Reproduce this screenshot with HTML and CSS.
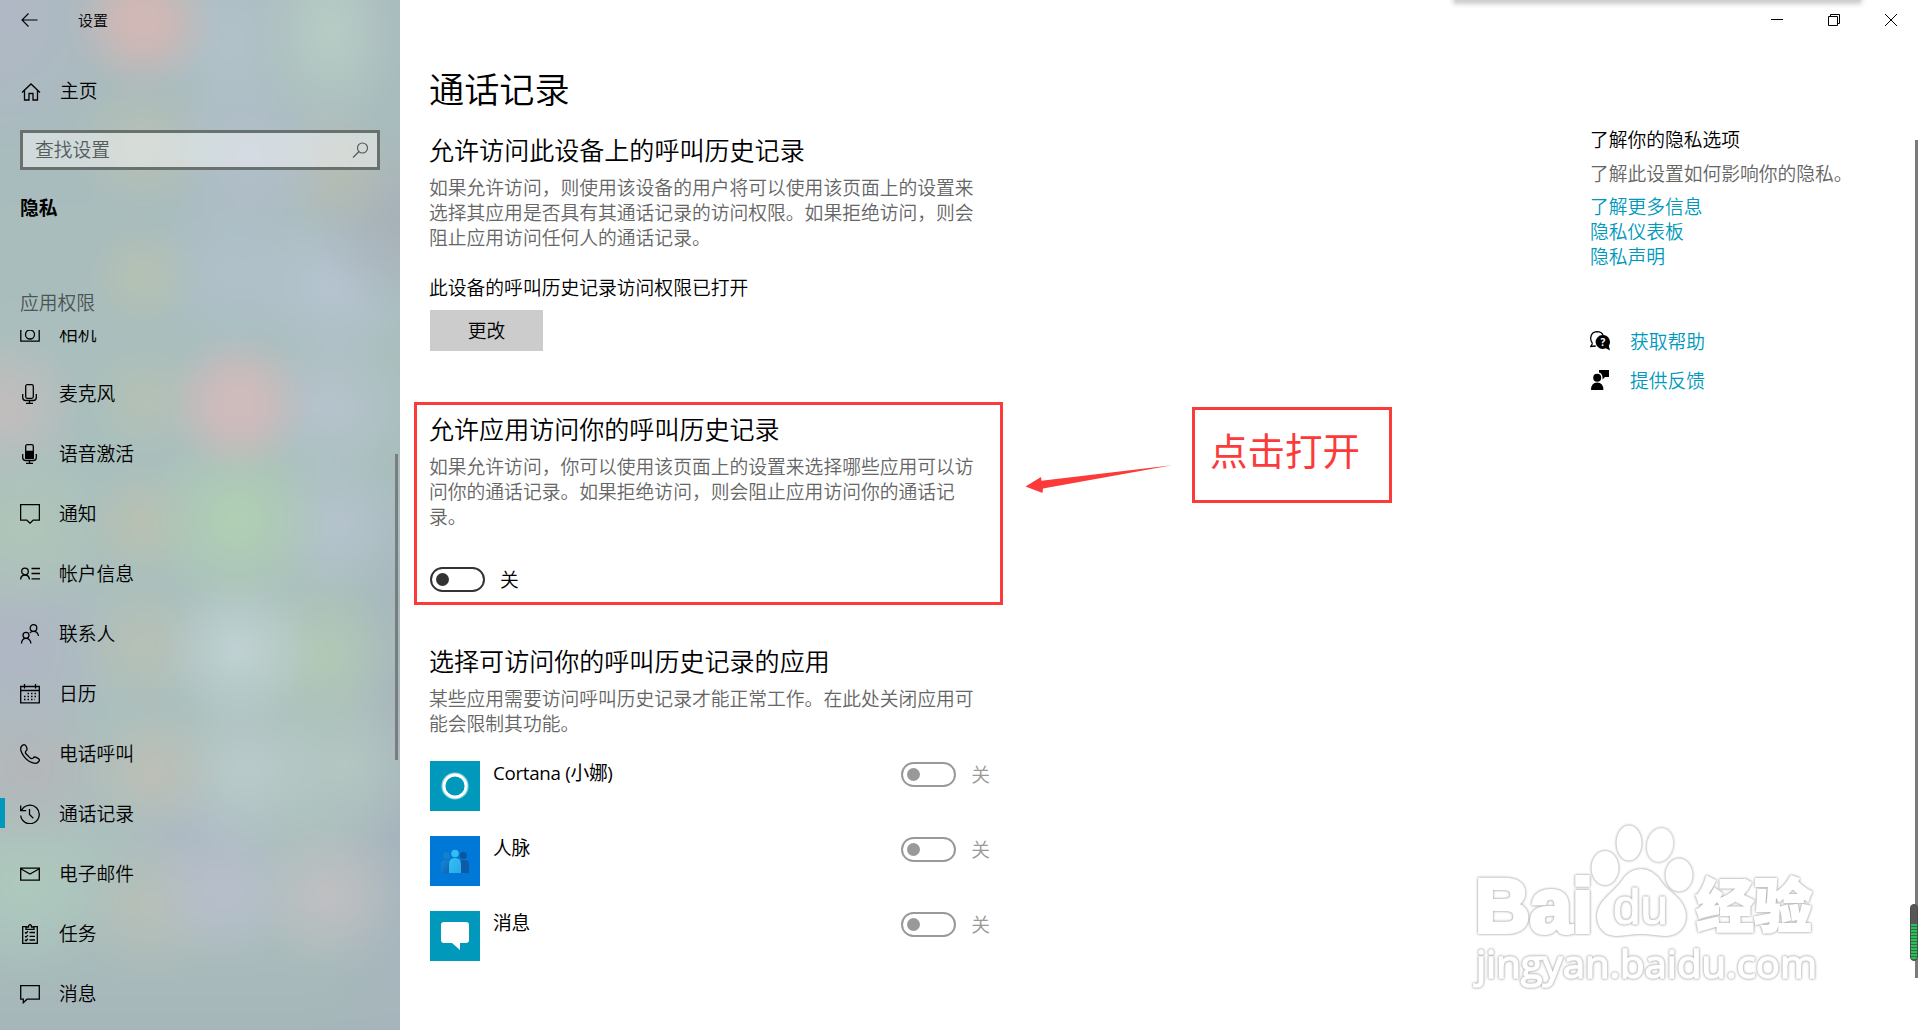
FILE: index.html
```html
<!DOCTYPE html>
<html lang="zh-CN">
<head>
    <meta charset="UTF-8">
    <meta name="viewport" content="width=device-width, initial-scale=1.0">
    <title>设置</title>
    <link rel="stylesheet" href="styles.css">
</head>
<body>

<div class="window">

<!-- Sidebar -->
<div class="sidebar">
    <div class="title-bar">
        <svg class="back" width="17" height="16" viewBox="0 0 17 16"><path d="M16.5 8H1M7.5 1.5L1 8l6.500 6.500"/></svg>
        <span>设置</span>
    </div>
    <div class="home">
        <svg width="20" height="20" viewBox="0 0 20 20"><path d="M1 10.500L10 2l9 8.500M3.500 8.500V18H8v-6.500h4V18h4.500V8.500"/></svg>
        <span>主页</span>
    </div>
    <div class="search">
        <span>查找设置</span>
        <svg width="17" height="17" viewBox="0 0 17 17"><circle cx="10.500" cy="6" r="5"/><path d="M7 9.500L1 15.500"/></svg>
    </div>
    <div class="category">隐私</div>
    <div class="group">应用权限</div>
    <div class="nav">
        <div class="item">
            <svg width="20" height="20" viewBox="0 0 20 20"><path d="M.8 4.500h4L6.500 2h7l1.700 2.500h4V17.200H.8z"/><circle cx="10" cy="10.500" r="4.500"/></svg>
            <span>相机</span>
        </div>
        <div class="item">
            <svg width="20" height="20" viewBox="0 0 20 20"><rect x="5.700" y=".7" width="7.600" height="13.600" rx="1.500"/><path d="M2.700 10v3.500q0 3 3 3h7.600q3 0 3-3V10M9.500 16.500v3M6 19.300h7"/></svg>
            <span>麦克风</span>
        </div>
        <div class="item">
            <svg width="20" height="20" viewBox="0 0 20 20"><rect x="5.700" y=".7" width="7.600" height="13.600" rx="1.500"/><path class="solid" d="M5.700 7.500h7.600v6.800H5.700z"/><path d="M2.700 10v3.500q0 3 3 3h7.600q3 0 3-3V10M9.500 16.500v3M6 19.300h7"/></svg>
            <span>语音激活</span>
        </div>
        <div class="item">
            <svg width="20" height="20" viewBox="0 0 20 20"><path d="M.6.600h18.800v15.500h-6.200L10 19.200l-3.200-3.100H.6z"/></svg>
            <span>通知</span>
        </div>
        <div class="item">
            <svg width="20" height="20" viewBox="0 0 20 20"><circle cx="5" cy="7.500" r="3.300"/><path d="M.6 15.500q.4-4.500 4.400-4.500t4.400 4.500M11.500 4.500H20M11.500 9.500H20M11.500 14.800H20"/></svg>
            <span>帐户信息</span>
        </div>
        <div class="item">
            <svg width="20" height="20" viewBox="0 0 20 20"><circle cx="6" cy="11.300" r="3"/><path d="M1.500 19.500q.3-5.200 4.500-5.200t5 5.200"/><circle cx="13.500" cy="4" r="3.300"/><path d="M9.800 9q1.200-1.700 3.700-1.700 4.300 0 5 4.700"/></svg>
            <span>联系人</span>
        </div>
        <div class="item">
            <svg width="20" height="20" viewBox="0 0 20 20"><path d="M.7 2.500h18.600v16.300H.7zM.7 6.500h18.600M4.500 0v4.500M15.500 0v4.500"/><path class="dots" d="M7.500 9.500H18M4 12.500h14M4 15.500h11"/></svg>
            <span>日历</span>
        </div>
        <div class="item">
            <svg width="20" height="20" viewBox="0 0 20 20"><path d="M3.300.8Q5 .3 6 2l1 2.500q.4 1.300-1 2.500-1.200 1 0 2.800l4.200 4.300q1.600 1.200 2.800 0 1.200-1.500 2.700-.9l2.300 1.200q2 1 1.200 2.500-1.200 2.500-4 2.400Q9 18.800 4.500 13.200.5 8 .7 4.500.8 1.800 3.300.8z"/></svg>
            <span>电话呼叫</span>
        </div>
        <div class="item active">
            <svg width="20" height="20" viewBox="0 0 20 20"><path d="M1.500 6.500A9.300 9.300 0 1 1 .7 11.500M.7 1.500v5.200h5.500M9.500 5v5.500l3.800 3.800"/></svg>
            <span>通话记录</span>
        </div>
        <div class="item">
            <svg width="20" height="20" viewBox="0 0 20 20"><path d="M.7 4.200h18.600v12H.7zM.7 4.700L10 10l9.300-5.300"/></svg>
            <span>电子邮件</span>
        </div>
        <div class="item">
            <svg width="20" height="20" viewBox="0 0 20 20"><path d="M7 2.700H2.700v16.600h14.600V2.700H13M6 5.300V3h2.500Q8.500.700 10 .7T11.500 3H14v2.300zM9.500 8.500H15M9.500 12.300H15M9.500 16H15M5 8.300l1 1 2-2M5 12.100l1 1 2-2M5 15.800l1 1 2-2"/></svg>
            <span>任务</span>
        </div>
        <div class="item">
            <svg width="20" height="20" viewBox="0 0 20 20"><path d="M.7 1.700h18.600v13.500H7l-3.700 3.500v-3.500H.7z"/></svg>
            <span>消息</span>
        </div>
    </div>
    <div class="side-scroll"></div>
</div>

<!-- Main content -->
<div class="main">
    <h1>通话记录</h1>
    <h2>允许访问此设备上的呼叫历史记录</h2>
    <p>如果允许访问，则使用该设备的用户将可以使用该页面上的设置来<br>选择其应用是否具有其通话记录的访问权限。如果拒绝访问，则会<br>阻止应用访问任何人的通话记录。</p>
    <div class="status">此设备的呼叫历史记录访问权限已打开</div>
    <button class="change">更改</button>

    <div class="marked">
        <h2>允许应用访问你的呼叫历史记录</h2>
        <p>如果允许访问，你可以使用该页面上的设置来选择哪些应用可以访<br>问你的通话记录。如果拒绝访问，则会阻止应用访问你的通话记<br>录。</p>
        <div class="switch"><i></i><span>关</span></div>
    </div>

    <h2>选择可访问你的呼叫历史记录的应用</h2>
    <p>某些应用需要访问呼叫历史记录才能正常工作。在此处关闭应用可<br>能会限制其功能。</p>
    <div class="apps">
        <div class="app">
            <svg width="50" height="50" viewBox="0 0 50 50"><rect width="50" height="50" fill="#0099bc"/><circle cx="25" cy="25" r="12.600" fill="none" stroke="#8fd0e0" stroke-width="2"/><circle cx="25" cy="25" r="11" fill="none" stroke="#fff" stroke-width="2.800"/></svg>
            <span class="name">Cortana (小娜)</span>
            <div class="switch off"><i></i><span>关</span></div>
        </div>
        <div class="app">
            <svg width="50" height="50" viewBox="0 0 50 50">
                <defs>
                    <linearGradient id="p1" x2="1" y2="1"><stop offset="0" stop-color="#35c1f1"/><stop offset="1" stop-color="#28a8ea"/></linearGradient>
                    <linearGradient id="p2" x2="1" y2="1"><stop offset="0" stop-color="#1988d9"/><stop offset="1" stop-color="#0f64ab"/></linearGradient>
                </defs>
                <rect width="50" height="50" fill="#0078d7"/>
                <circle cx="16.500" cy="19.500" r="3.500" fill="#1482ca"/><path d="M11 37V29q0-5 5-5h4v13z" fill="url(#p2)"/>
                <circle cx="33.300" cy="19.500" r="3.500" fill="#0c559a"/><path d="M39 37V29q0-5-5-5h-4v13z" fill="#0d5ba5"/>
                <circle cx="25" cy="17.500" r="3.800" fill="#35bdf0"/><path d="M19 37V28q0-6 6-6t6 6v9z" fill="url(#p1)"/>
            </svg>
            <span class="name">人脉</span>
            <div class="switch off"><i></i><span>关</span></div>
        </div>
        <div class="app">
            <svg width="50" height="50" viewBox="0 0 50 50"><rect width="50" height="50" fill="#0099bc"/><path d="M14 11h22q3 0 3 3v15q0 3-3 3h-6v7l-8-7h-8q-3 0-3-3V14q0-3 3-3z" fill="#fff"/></svg>
            <span class="name">消息</span>
            <div class="switch off"><i></i><span>关</span></div>
        </div>
    </div>
</div>

<!-- Help column -->
<div class="aside">
    <div class="controls">
        <svg width="12" height="12" viewBox="0 0 12 12"><path d="M0 5.500h12"/></svg>
        <svg width="12" height="12" viewBox="0 0 12 12"><path d="M.5 2.500h9v9h-9zM2.500 2.500v-2h9v9h-2"/></svg>
        <svg width="12" height="12" viewBox="0 0 12 12"><path d="M0 0l12 12M12 0L0 12"/></svg>
    </div>
    <div class="info">
        <div class="info-title">了解你的隐私选项</div>
        <div class="info-text">了解此设置如何影响你的隐私。</div>
        <a>了解更多信息</a>
        <a>隐私仪表板</a>
        <a>隐私声明</a>
        <div class="help">
            <svg width="20" height="20" viewBox="0 0 20 20"><path d="M2.500 12.500Q.5 10 .7 7 1.300.800 7 .7q4.500.1 6 3.300M2.500 12.500L.8 15.500l5-.5" fill="none" stroke="#000" stroke-width="1.300"/><path d="M13 4a7 7 0 0 1 5.800 10.800L20 19.500l-4.300-2.200A7 7 0 1 1 13 4z"/><text x="13" y="15" class="q">?</text></svg>
            <a>获取帮助</a>
        </div>
        <div class="help">
            <svg width="20" height="20" viewBox="0 0 20 20"><circle cx="7.200" cy="7.700" r="4"/><path d="M1 20q0-7.500 6.200-7.500T13.400 20zM9 0h10v7h-4l-2.500 2.500V7Q12 3 9 2.500z"/></svg>
            <a>提供反馈</a>
        </div>
    </div>
</div>

<!-- Things floating over the window -->
<div class="top-shadow"></div>
<div class="page-scroll"></div>
<div class="meter"></div>
<div class="callout">点击打开</div>
<svg class="arrow" width="150" height="32" viewBox="0 0 150 32"><path d="M.5 21.500L16 12l.5 3.700L147 .3 18 23.500l-.5 4.500z"/></svg>

<svg class="watermark" width="360" height="180" viewBox="0 0 360 180">
    <text class="mark bai" x="5" y="112" textLength="118" lengthAdjust="spacingAndGlyphs">Bai</text>
    <ellipse class="mark" cx="135" cy="48" rx="12.500" ry="16"/>
    <ellipse class="mark" cx="159" cy="23" rx="11.500" ry="16.500"/>
    <ellipse class="mark" cx="190" cy="25" rx="12" ry="16" transform="rotate(12 190 25)"/>
    <ellipse class="mark" cx="209" cy="55" rx="12.500" ry="15.500"/>
    <path class="mark" d="M171 50c9 0 15 5 20 13 7 10 24 17 24 33 0 11-8 19-19 19-9 0-15-2-25-2s-16 2-25 2c-11 0-18-8-18-19 0-15 16-22 24-34 5-8 11-12 19-12z"/>
    <text class="mark du" x="143" y="104" textLength="55" lengthAdjust="spacingAndGlyphs">du</text>
    <text class="mark jy" x="226" y="107" textLength="116" lengthAdjust="spacingAndGlyphs">经验</text>
    <text class="mark url" x="6" y="158" textLength="341" lengthAdjust="spacingAndGlyphs">jingyan.baidu.com</text>
</svg>

</div>

</body>
</html>
```
FILE: styles.css
```css
body {
    margin: 0;
    background-color: #fff;
    color: #000;
    font-family: "Noto Sans CJK SC", sans-serif;
    font-size: 18.75px;
    font-weight: 350;
    line-height: 25px;
}
.window {
    position: relative;
    display: flex;
    width: 1920px;
    height: 1030px;
    overflow: hidden;
}
svg {
    display: block;
    flex: none;
}
h1, h2, p {
    margin: 0;
    font-weight: 350;
}

/* Sidebar */
.sidebar {
    position: relative;
    z-index: 0;
    display: flex;
    flex-direction: column;
    flex: none;
    width: 400px;
    height: 1030px;
    overflow: hidden;
    background-color: #a9bcbd;
}
/* blurred wallpaper behind the pane */
.sidebar::before {
    content: "";
    position: absolute;
    z-index: -1;
    left: -20px;
    top: -20px;
    width: 440px;
    height: 1070px;
    filter: blur(8px);
    background:
        radial-gradient(circle at 163px 40px, #d0b8b6 20px, transparent 72px),
        radial-gradient(ellipse 75px 110px at 350px 50px, #b8cdc5, transparent),
        radial-gradient(ellipse 75px 110px at 250px 60px, #b2c2ca, transparent),
        radial-gradient(ellipse 125px 140px at 20px 40px, #b1b8c6, transparent),
        radial-gradient(circle at 162px 165px, #b8c0b4, transparent 70px),
        radial-gradient(circle at 270px 175px, #b2becc, transparent 90px),
        radial-gradient(circle at 355px 190px, #b7bcb2, transparent 65px),
        radial-gradient(circle at 420px 240px, #a8b0b8, transparent 95px),
        radial-gradient(circle at 162px 297px, #b6c1b2, transparent 58px),
        radial-gradient(circle at 355px 305px, #b6c4d2, transparent 85px),
        radial-gradient(circle at 255px 290px, #b0c0cb, transparent 90px),
        radial-gradient(circle at 258px 423px, #cebbbc 24px, transparent 72px),
        radial-gradient(circle at 25px 427px, #c4bdbd, transparent 78px),
        radial-gradient(circle at 165px 420px, #b5c1b4, transparent 60px),
        radial-gradient(circle at 350px 425px, #b6c3cd, transparent 80px),
        radial-gradient(circle at 257px 540px, #b0cfb3 5px, transparent 92px),
        radial-gradient(circle at 162px 543px, #bac0b1, transparent 60px),
        radial-gradient(circle at 45px 550px, #b0c6b8, transparent 90px),
        radial-gradient(circle at 357px 545px, #b5c3ce, transparent 75px),
        radial-gradient(circle at 258px 670px, #c1d3d4, transparent 78px),
        radial-gradient(circle at 345px 675px, #b2c9b5, transparent 82px),
        radial-gradient(circle at 163px 665px, #b7c0b5, transparent 70px),
        radial-gradient(circle at 35px 670px, #b0b5c5, transparent 115px),
        radial-gradient(circle at 172px 790px, #bebfb5, transparent 68px),
        radial-gradient(circle at 50px 790px, #b5b6b9, transparent 90px),
        radial-gradient(circle at 265px 790px, #b9cbca, transparent 85px),
        radial-gradient(circle at 365px 785px, #b4c7c1, transparent 85px),
        radial-gradient(circle at 245px 913px, #b8becc, transparent 75px),
        radial-gradient(circle at 350px 915px, #c1bfc2, transparent 78px),
        radial-gradient(circle at 170px 925px, #b8bfb7, transparent 75px),
        radial-gradient(circle at 45px 905px, #adc9bd, transparent 100px),
        radial-gradient(circle at 220px 860px, #acb8c4, transparent 90px),
        radial-gradient(ellipse 90px 400px at 420px 820px, #a5b3bd, transparent),
        linear-gradient(#a8babd, #a9bfbd 45%, #abbfbd 85%, #a4b5b8);
}
.sidebar svg {
    fill: none;
    stroke: #000;
    stroke-width: 1.3;
}
.title-bar {
    display: flex;
    align-items: center;
    height: 40px;
    padding-left: 21px;
    font-size: 15px;
}
.title-bar .back {
    stroke-width: 1.1;
}
.title-bar span {
    margin: -2px 0 0 40px;
}
.home {
    display: flex;
    align-items: center;
    gap: 19px;
    height: 40px;
    margin-top: 32px;
    padding-left: 21px;
}
.home span {
    margin-top: -5px;
}
.search {
    display: flex;
    align-items: center;
    justify-content: space-between;
    box-sizing: border-box;
    width: 360px;
    height: 40px;
    margin: 18px 0 0 20px;
    padding: 0 8px 0 12px;
    border: 3px solid #69716f;
    background-color: rgba(255, 255, 255, 0.45);
    color: #565c5c;
}
.search span {
    margin-top: -3px;
}
.search svg {
    stroke: #4d5555;
    stroke-width: 1.1;
}
.category {
    margin: 24px 0 0 20px;
    font-weight: 700;
}
.group {
    margin: 70px 0 0 20px;
    color: #4b5456;
}
.nav {
    flex: 1;
    margin-top: 16px;
    overflow: hidden;
}
.item {
    display: flex;
    align-items: center;
    gap: 19px;
    height: 60px;
    padding-left: 20px;
}
.item span {
    margin-top: -3px;
}
.item:first-child {
    margin-top: -26px;
}
.item.active {
    padding-left: 0;
    gap: 0;
}
.item.active::before {
    content: "";
    width: 5px;
    height: 30px;
    margin: -2px 15px 0 0;
    background-color: #0099bc;
}
.item.active span {
    margin-left: 19px;
}
.solid {
    fill: #000;
}
.dots {
    stroke-width: 1.5;
    stroke-dasharray: 1.5 2;
}
.side-scroll {
    position: absolute;
    left: 395px;
    top: 454px;
    width: 3px;
    height: 306px;
    background-color: #7a7d7f;
}

/* Main content */
.main {
    flex: none;
    width: 590px;
    padding: 63px 0 0 30px;
}
h1 {
    margin-left: -1px;
    font-size: 35.2px;
    line-height: 50px;
}
h2 {
    margin-left: -1px;
    font-size: 25.05px;
    line-height: 34px;
}
.main > h2 {
    margin-top: 19px;
}
p {
    margin: 8px 0 0 -1px;
    color: #666;
    font-size: 18.8px;
    white-space: nowrap;
}
.status {
    margin: 25px 0 0 -1px;
    font-size: 18.8px;
}
.change {
    display: block;
    width: 113px;
    height: 41px;
    margin-top: 11px;
    padding: 0 0 3px;
    border: none;
    background-color: #ccc;
    font: inherit;
}
.marked {
    box-sizing: border-box;
    width: 589px;
    height: 203px;
    margin: 51px 0 0 -16px;
    padding: 6px 0 0 13px;
    border: 3px solid #fd3a3a;
}
.marked .switch {
    margin-top: 39px;
}
.main > .marked + h2 {
    margin-top: 38px;
}
.switch {
    display: flex;
    align-items: center;
    gap: 15px;
    height: 25px;
}
.switch i {
    display: flex;
    align-items: center;
    box-sizing: border-box;
    width: 55px;
    height: 25px;
    padding-left: 4px;
    border: 2.5px solid #333;
    border-radius: 13px;
}
.switch i::before {
    content: "";
    width: 13px;
    height: 13px;
    border-radius: 50%;
    background-color: #333;
}
.switch span {
    margin-top: -2px;
}
.switch.off {
    color: #999;
}
.switch.off i {
    border-color: #999;
}
.switch.off i::before {
    background-color: #999;
}
.apps {
    display: flex;
    flex-direction: column;
    gap: 25px;
    margin-top: 26px;
}
.app {
    display: flex;
    align-items: flex-start;
    width: 560px;
}
.name {
    flex: 1;
    margin: -1px 0 0 13px;
    font-family: "Open Sans", "Noto Sans CJK SC", sans-serif;
    font-weight: 400;
    letter-spacing: -0.3px;
}
.app .switch {
    margin-top: 1px;
}

/* Help column */
.aside {
    flex: 1;
}
.controls {
    display: flex;
    justify-content: flex-end;
    gap: 45px;
    padding: 14px 23px 0 0;
}
.controls svg {
    fill: none;
    stroke: #000;
}
.info {
    display: flex;
    flex-direction: column;
    margin: 100px 0 0 570px;
}
.info-text {
    margin: 9px 0 8px;
    color: #666;
}
a {
    color: #0099bc;
}
.help {
    display: flex;
    align-items: center;
    gap: 20px;
    margin-top: 15px;
}
.help a {
    margin-top: -1px;
}
a + .help {
    margin-top: 61px;
}
.q {
    fill: #fff;
    font: bold 10px "Open Sans", sans-serif;
    text-anchor: middle;
}

/* Overlays */
.top-shadow {
    position: absolute;
    left: 1455px;
    top: -10px;
    width: 405px;
    height: 12px;
    background-color: #d0d0d0;
    box-shadow: 0 0 5px 2px #ccc;
}
.page-scroll {
    position: absolute;
    left: 1915px;
    top: 140px;
    width: 3px;
    height: 838px;
    background-color: #7a7a7a;
}
.meter {
    position: absolute;
    left: 1910px;
    top: 904px;
    box-sizing: border-box;
    width: 8px;
    height: 57px;
    border: 1px solid #4b4b4b;
    border-radius: 4px;
    background:
        repeating-linear-gradient(#22c35a 0 2px, #3b6b49 2px 3px) 0 19px / 6px 35px no-repeat,
        #575757;
}
.callout {
    position: absolute;
    left: 1192px;
    top: 407px;
    box-sizing: border-box;
    width: 200px;
    height: 96px;
    padding-left: 15px;
    border: 3px solid #fd3a3a;
    color: #fd3a3a;
    font-size: 37.5px;
    font-weight: 400;
    line-height: 77px;
}
.arrow {
    position: absolute;
    left: 1025px;
    top: 465px;
    fill: #fd3a3a;
}
.watermark {
    position: absolute;
    left: 1470px;
    top: 820px;
    overflow: visible;
}
.mark {
    fill: #fff;
    stroke: #fff;
    stroke-width: 2;
    filter: drop-shadow(0 0 1px #aaa) drop-shadow(0 0 1px #ccc);
}
.bai {
    stroke-width: 4;
    font: bold 76px "Liberation Sans", sans-serif;
}
.du {
    stroke-width: 1;
    font: 50px "Liberation Sans", sans-serif;
}
.jy {
    font: 900 58px "Noto Sans CJK SC", sans-serif;
}
.url {
    stroke-width: 1.5;
    font: 39px "Open Sans", sans-serif;
}
```
